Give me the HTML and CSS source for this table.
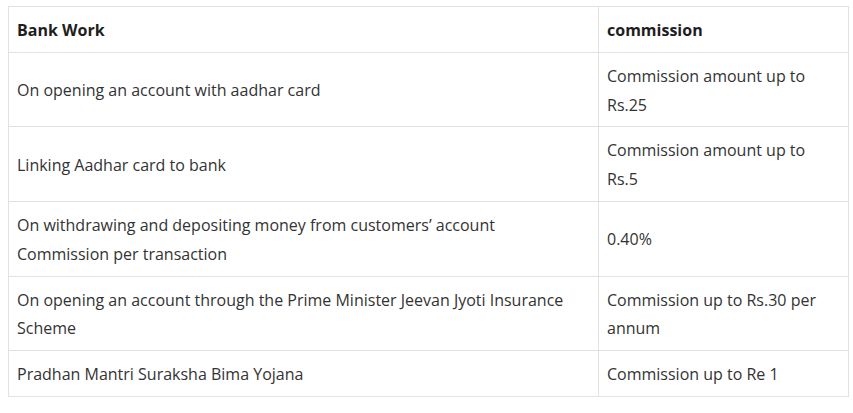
FILE: index.html
```html
<!DOCTYPE html>
<html>
<head>
<meta charset="utf-8">
<link rel="stylesheet" href="styles.css">
</head>
<body>
<table class="commission-table">
  <thead>
    <tr><th class="col-work">Bank Work</th><th>commission</th></tr>
  </thead>
  <tbody>
    <tr><td>On opening an account with aadhar card</td><td>Commission amount up to Rs.25</td></tr>
    <tr><td>Linking Aadhar card to bank</td><td>Commission amount up to Rs.5</td></tr>
    <tr><td>On withdrawing and depositing money from customers’ account<br>Commission per transaction</td><td>0.40%</td></tr>
    <tr><td>On opening an account through the Prime Minister Jeevan Jyoti Insurance Scheme</td><td>Commission up to Rs.30 per annum</td></tr>
    <tr><td>Pradhan Mantri Suraksha Bima Yojana</td><td>Commission up to Re 1</td></tr>
  </tbody>
</table>
</body>
</html>
```
FILE: styles.css
```css
html, body { margin: 0; background: #fff; }
body { padding: 6px 4px 0 8px; font-family: "Open Sans", sans-serif; color: #333; }
.commission-table { border-collapse: collapse; width: 841px; font-size: 16px; line-height: 1.8; }
.commission-table th, .commission-table td { border: 1px solid #e2e2e2; padding: 9px 8px 7px; text-align: left; vertical-align: middle; }
.commission-table th { font-weight: 700; color: #1e1e1e; }
.col-work { width: 573px; }
```
